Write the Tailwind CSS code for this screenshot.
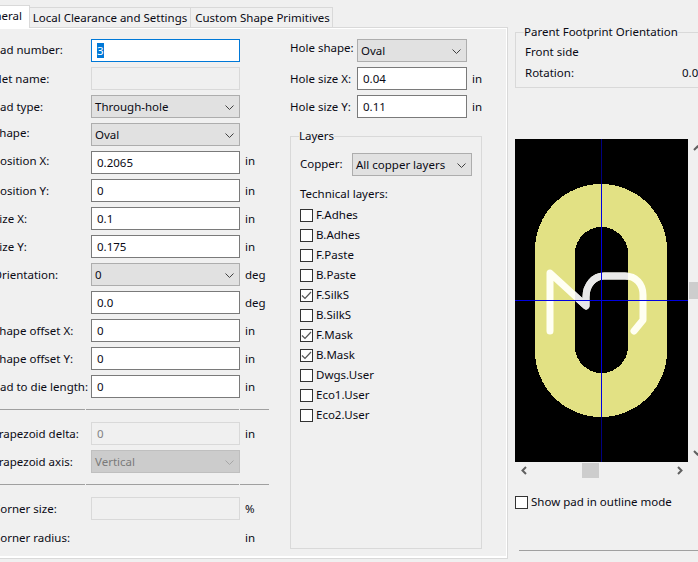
<!DOCTYPE html>
<html lang="en">
<head>
  <meta charset="UTF-8">
  <meta name="viewport" content="width=device-width, initial-scale=1.0">
  <title>Pad Properties</title>
  <script src="https://cdn.jsdelivr.net/npm/@tailwindcss/browser@4"></script>
</head>
<body class="bg-[#f0f0f0] font-['Noto_Sans',sans-serif] text-[11.5px] text-[#0a0a14]">
<div class="w-[698px] h-[562px] overflow-hidden relative">

  <!-- tabs -->
  <div class="flex h-[27px] items-end whitespace-nowrap">
    <div class="w-[30px] h-[23px] bg-white border-t border-r border-[#d9d9d9] flex items-center justify-end pr-[7px] pb-[3px] relative z-10 -mb-[1px]">neral</div>
    <div class="w-[161px] h-[20px] border-t border-r border-[#d9d9d9] flex items-center justify-center">Local Clearance and Settings</div>
    <div class="w-[142px] h-[20px] border-t border-r border-[#d9d9d9] flex items-center justify-center pl-[2px]">Custom Shape Primitives</div>
  </div>

  <div class="flex">
    <!-- notebook page -->
    <div class="w-[508px] h-[532px] border-t border-r border-b border-[#d9d9d9] shadow-[inset_-1px_-2px_0_#fff,inset_0_1px_0_#fff] flex shrink-0">

      <!-- left form -->
      <div class="w-[290px] shrink-0 pt-[11px]">
        <div class="flex h-[23px] mb-[5px] items-center ml-[-7px]">
          <span class="w-[98px] -mt-[1px]">Pad number:</span>
          <div class="w-[149px] h-[23px] bg-white border border-[#0078d7] flex items-center pl-[5px]"><span class="bg-[#0078d7] text-white leading-[15px] w-[7px]">3</span></div>
        </div>
        <div class="flex h-[23px] mb-[5px] items-center ml-[-7px]">
          <span class="w-[98px]">Net name:</span>
          <div class="w-[149px] h-[23px] border border-[#d9d9d9]"></div>
        </div>
        <div class="flex h-[23px] mb-[5px] items-center ml-[-7px]">
          <span class="w-[98px]">Pad type:</span>
          <div class="w-[149px] h-[23px] bg-[#e1e1e1] border border-[#adadad] flex items-center justify-between pl-[3px] pr-[5px] pt-px">Through-hole
            <svg width="9" height="5" viewBox="0 0 9 5" fill="none" stroke="#404040"><path d="M.5.5l4 4 4-4"/></svg></div>
        </div>
        <div class="flex h-[23px] mb-[5px] items-center ml-[-7px]">
          <span class="w-[98px] -mt-[3px]">Shape:</span>
          <div class="w-[149px] h-[23px] bg-[#e1e1e1] border border-[#adadad] flex items-center justify-between pl-[3px] pr-[5px] pt-px">Oval
            <svg width="9" height="5" viewBox="0 0 9 5" fill="none" stroke="#404040"><path d="M.5.5l4 4 4-4"/></svg></div>
        </div>
        <div class="flex h-[23px] mb-[5px] items-center ml-[-7px]">
          <span class="w-[98px] -mt-[3px]">Position X:</span>
          <div class="w-[149px] h-[23px] bg-white border border-[#7a7a7a] flex items-center pl-[5px] pt-px">0.2065</div>
          <span class="ml-[5px] -mt-[3px]">in</span>
        </div>
        <div class="flex h-[23px] mb-[5px] items-center ml-[-7px]">
          <span class="w-[98px]">Position Y:</span>
          <div class="w-[149px] h-[23px] bg-white border border-[#7a7a7a] flex items-center pl-[5px]">0</div>
          <span class="ml-[5px]">in</span>
        </div>
        <div class="flex h-[23px] mb-[5px] items-center ml-[-7px]">
          <span class="w-[98px]">Size X:</span>
          <div class="w-[149px] h-[23px] bg-white border border-[#7a7a7a] flex items-center pl-[5px]">0.1</div>
          <span class="ml-[5px]">in</span>
        </div>
        <div class="flex h-[23px] mb-[5px] items-center ml-[-7px]">
          <span class="w-[98px]">Size Y:</span>
          <div class="w-[149px] h-[23px] bg-white border border-[#7a7a7a] flex items-center pl-[5px]">0.175</div>
          <span class="ml-[5px]">in</span>
        </div>
        <div class="flex h-[23px] mb-[5px] items-center ml-[-7px]">
          <span class="w-[98px]">Orientation:</span>
          <div class="w-[149px] h-[23px] bg-[#e1e1e1] border border-[#adadad] flex items-center justify-between pl-[3px] pr-[5px] pt-px">0
            <svg width="9" height="5" viewBox="0 0 9 5" fill="none" stroke="#404040"><path d="M.5.5l4 4 4-4"/></svg></div>
          <span class="ml-[5px]">deg</span>
        </div>
        <div class="flex h-[23px] mb-[5px] items-center ml-[-7px]">
          <span class="w-[98px]"></span>
          <div class="w-[149px] h-[23px] bg-white border border-[#7a7a7a] flex items-center pl-[5px]">0.0</div>
          <span class="ml-[5px]">deg</span>
        </div>
        <div class="flex h-[23px] mb-[5px] items-center ml-[-7px]">
          <span class="w-[98px]">Shape offset X:</span>
          <div class="w-[149px] h-[23px] bg-white border border-[#7a7a7a] flex items-center pl-[5px]">0</div>
          <span class="ml-[5px]">in</span>
        </div>
        <div class="flex h-[23px] mb-[5px] items-center ml-[-7px]">
          <span class="w-[98px]">Shape offset Y:</span>
          <div class="w-[149px] h-[23px] bg-white border border-[#7a7a7a] flex items-center pl-[5px]">0</div>
          <span class="ml-[5px]">in</span>
        </div>
        <div class="flex h-[23px] items-center ml-[-7px]">
          <span class="w-[98px] whitespace-nowrap">Pad to die length:</span>
          <div class="w-[149px] h-[23px] bg-white border border-[#7a7a7a] flex items-center pl-[5px]">0</div>
          <span class="ml-[5px]">in</span>
        </div>

        <div class="flex gap-px mt-[11px] h-px w-[269px]">
          <div class="w-[85px] bg-[#a0a0a0]"></div><div class="w-[153px] bg-[#a0a0a0]"></div><div class="w-[29px] bg-[#a0a0a0]"></div>
        </div>

        <div class="flex h-[23px] mb-[5px] mt-[12px] items-center ml-[-7px]">
          <span class="w-[98px]">Trapezoid delta:</span>
          <div class="w-[149px] h-[23px] border border-[#d9d9d9] text-[#838383] flex items-center pl-[5px]">0</div>
          <span class="ml-[5px]">in</span>
        </div>
        <div class="flex h-[23px] items-center ml-[-7px]">
          <span class="w-[98px]">Trapezoid axis:</span>
          <div class="w-[149px] h-[23px] bg-[#cccccc] border border-[#bfbfbf] text-[#7a7a7a] flex items-center justify-between pl-[3px] pr-[5px] pt-px">Vertical
            <svg width="9" height="5" viewBox="0 0 9 5" fill="none" stroke="#a6a6a6"><path d="M.5.5l4 4 4-4"/></svg></div>
        </div>

        <div class="flex gap-px mt-[11px] h-px w-[269px]">
          <div class="w-[85px] bg-[#a0a0a0]"></div><div class="w-[153px] bg-[#a0a0a0]"></div><div class="w-[29px] bg-[#a0a0a0]"></div>
        </div>

        <div class="flex h-[23px] mt-[12px] items-center ml-[-7px]">
          <span class="w-[98px]">Corner size:</span>
          <div class="w-[149px] h-[23px] border border-[#d9d9d9]"></div>
          <span class="ml-[5px]">%</span>
        </div>
        <div class="flex h-[19px] mt-[8px] items-center ml-[-7px]">
          <span class="w-[247px]">Corner radius:</span>
          <span class="ml-[5px]">in</span>
        </div>
      </div>

      <!-- hole + layers column -->
      <div class="w-[192px] shrink-0 pt-[11px]">
        <div class="flex h-[23px] mb-[5px] items-center">
          <span class="w-[67px] -mt-[6px]">Hole shape:</span>
          <div class="w-[110px] h-[23px] bg-[#e1e1e1] border border-[#adadad] flex items-center justify-between pl-[3px] pr-[5px] pt-px">Oval
            <svg width="9" height="5" viewBox="0 0 9 5" fill="none" stroke="#404040"><path d="M.5.5l4 4 4-4"/></svg></div>
        </div>
        <div class="flex h-[23px] mb-[5px] items-center">
          <span class="w-[67px]">Hole size X:</span>
          <div class="w-[110px] h-[23px] bg-white border border-[#7a7a7a] flex items-center pl-[5px]">0.04</div>
          <span class="ml-[5px]">in</span>
        </div>
        <div class="flex h-[23px] items-center">
          <span class="w-[67px]">Hole size Y:</span>
          <div class="w-[110px] h-[23px] bg-white border border-[#7a7a7a] flex items-center pl-[5px]">0.11</div>
          <span class="ml-[5px]">in</span>
        </div>

        <fieldset class="mt-[10px] h-[421px] border border-[#d9d9d9] pl-[9px] pr-[9px] min-w-0">
          <legend class="-ml-px leading-[16px]">Layers</legend>
          <div class="flex items-center h-[23px] mt-[9px]">
            <span class="w-[52px] -mt-[2px]">Copper:</span>
            <div class="w-[120px] h-[23px] bg-[#e1e1e1] border border-[#adadad] flex items-center justify-between pl-[3px] pr-[5px] pt-px">All copper layers
              <svg width="9" height="5" viewBox="0 0 9 5" fill="none" stroke="#404040"><path d="M.5.5l4 4 4-4"/></svg></div>
          </div>
          <div class="mt-[10px] leading-[16px]">Technical layers:</div>
          <div class="flex flex-col mt-[3px]">
            <label class="flex items-center h-[20px] gap-[3px]"><span class="w-[13px] h-[13px] border border-[#333] bg-white"></span>F.Adhes</label>
            <label class="flex items-center h-[20px] gap-[3px]"><span class="w-[13px] h-[13px] border border-[#333] bg-white"></span>B.Adhes</label>
            <label class="flex items-center h-[20px] gap-[3px]"><span class="w-[13px] h-[13px] border border-[#333] bg-white"></span>F.Paste</label>
            <label class="flex items-center h-[20px] gap-[3px]"><span class="w-[13px] h-[13px] border border-[#333] bg-white"></span>B.Paste</label>
            <label class="flex items-center h-[20px] gap-[3px]"><span class="w-[13px] h-[13px] border border-[#333] bg-white flex items-center justify-center"><svg width="11" height="9" viewBox="0 0 11 9" fill="none" stroke="#555" stroke-width="1.2"><path d="M1 4.500l3 3 6-6.500"/></svg></span>F.SilkS</label>
            <label class="flex items-center h-[20px] gap-[3px]"><span class="w-[13px] h-[13px] border border-[#333] bg-white"></span>B.SilkS</label>
            <label class="flex items-center h-[20px] gap-[3px]"><span class="w-[13px] h-[13px] border border-[#333] bg-white flex items-center justify-center"><svg width="11" height="9" viewBox="0 0 11 9" fill="none" stroke="#555" stroke-width="1.2"><path d="M1 4.500l3 3 6-6.500"/></svg></span>F.Mask</label>
            <label class="flex items-center h-[20px] gap-[3px]"><span class="w-[13px] h-[13px] border border-[#333] bg-white flex items-center justify-center"><svg width="11" height="9" viewBox="0 0 11 9" fill="none" stroke="#555" stroke-width="1.2"><path d="M1 4.500l3 3 6-6.500"/></svg></span>B.Mask</label>
            <label class="flex items-center h-[20px] gap-[3px]"><span class="w-[13px] h-[13px] border border-[#333] bg-white"></span>Dwgs.User</label>
            <label class="flex items-center h-[20px] gap-[3px]"><span class="w-[13px] h-[13px] border border-[#333] bg-white"></span>Eco1.User</label>
            <label class="flex items-center h-[20px] gap-[3px]"><span class="w-[13px] h-[13px] border border-[#333] bg-white"></span>Eco2.User</label>
          </div>
        </fieldset>
      </div>
    </div>

    <!-- right column -->
    <div class="ml-[7px] w-[183px] shrink-0">
      <fieldset class="mt-[-3px] h-[64px] w-[200px] border border-[#d9d9d9] pl-[8px] min-w-0">
        <legend class="leading-[16px]">Parent Footprint Orientation</legend>
        <div class="ml-[1px] mt-[4px] leading-[16px]">Front side</div>
        <div class="ml-[1px] mt-[5px] leading-[16px] flex w-[173px] justify-between whitespace-nowrap"><span>Rotation:</span><span class="w-[16px]">0.0</span></div>
      </fieldset>

      <div class="mt-[51px] flex w-[183px]">
        <svg width="173" height="323" viewBox="515 139 173 323" class="shrink-0 block">
          <defs><clipPath id="holeclip"><rect x="575" y="227" width="53" height="146"/></clipPath></defs>
          <rect x="515" y="139" width="173" height="323" fill="#000"/>
          <g shape-rendering="crispEdges">
            <rect x="535" y="184" width="132" height="233" rx="66" fill="#e2e184"/>
            <rect x="575" y="227" width="53" height="146" rx="26.500" fill="#000"/>
          </g>
          <path d="M550 331V273L586 306V297C586 285 594 276 604 276H625C636 276 643 284 643 295V320L634 331" fill="none" stroke="#fffff2" stroke-width="7" stroke-linecap="round" stroke-linejoin="round"/>
          <path d="M550 331V273L586 306V297C586 285 594 276 604 276H625C636 276 643 284 643 295V320L634 331" fill="none" stroke="#e8e8e8" stroke-width="7" stroke-linecap="round" stroke-linejoin="round" clip-path="url(#holeclip)"/>
          <rect x="601" y="139" width="1" height="323" fill="#000080"/>
          <rect x="601" y="184" width="1" height="233" fill="#0000e0"/>
          <rect x="515" y="300" width="173" height="1" fill="#0000e0"/>
        </svg>
        <div class="w-[10px] h-[323px] ml-px flex flex-col overflow-visible">
          <svg width="9" height="6" viewBox="0 0 9 6" fill="none" stroke="#606060" stroke-width="2" class="mt-[6px] ml-[4px] shrink-0"><path d="M1 5l3.500-3.500L8 5"/></svg>
          <div class="w-[9px] h-[17px] bg-[#cdcdcd] mt-[131px] shrink-0"></div>
          <svg width="9" height="6" viewBox="0 0 9 6" fill="none" stroke="#606060" stroke-width="2" class="mt-[151px] ml-[4px] shrink-0"><path d="M1 1l3.500 3.500L8 1"/></svg>
        </div>
      </div>

      <div class="flex items-center w-[173px] h-[16px]">
        <svg width="6" height="9" viewBox="0 0 6 9" fill="none" stroke="#606060" stroke-width="2" class="ml-[6px] shrink-0"><path d="M5 1L1.500 4.500 5 8"/></svg>
        <div class="w-[17px] h-[15px] bg-[#cdcdcd] ml-[55px] shrink-0"></div>
        <svg width="6" height="9" viewBox="0 0 6 9" fill="none" stroke="#606060" stroke-width="2" class="ml-[78px] shrink-0"><path d="M1 1l3.500 3.500L1 8"/></svg>
      </div>

      <label class="flex items-center gap-[3px] mt-[16px] h-[16px] whitespace-nowrap"><span class="w-[13px] h-[13px] border border-[#333] bg-white shrink-0"></span>Show pad in outline mode</label>
      <div class="mt-[40px] ml-[4px] h-px w-[200px] bg-[#a0a0a0]"></div>
    </div>
  </div>
</div>
</body>
</html>
